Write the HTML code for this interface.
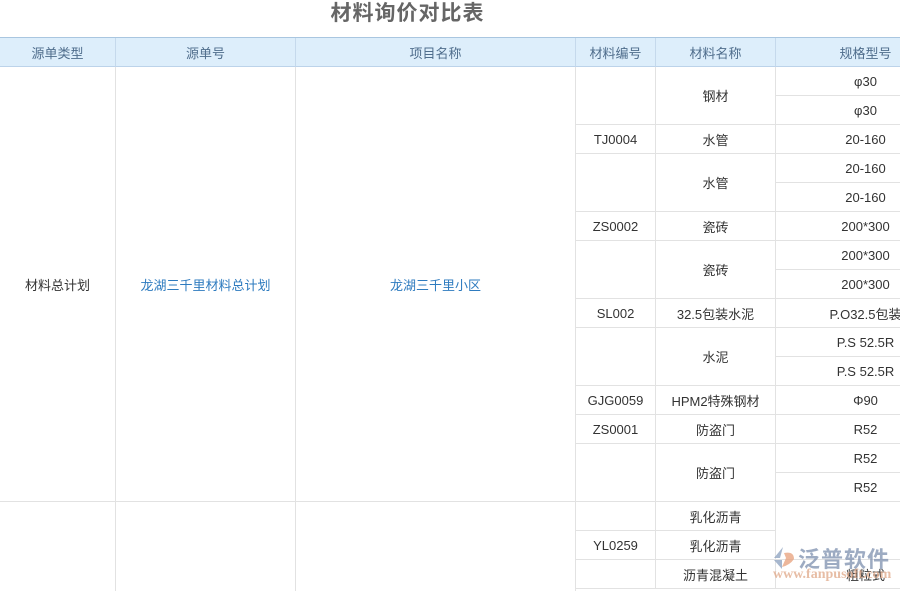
<!DOCTYPE html>
<html><head><meta charset="utf-8"><style>
html,body{margin:0;padding:0;width:900px;height:591px;overflow:hidden;background:#fff;}
body{position:relative;font-family:"Liberation Sans","Noto Sans CJK SC",sans-serif;font-size:13px;color:#333;}
.t{position:absolute;left:0;width:815px;top:0;height:30px;text-align:center;font-size:21px;font-weight:bold;color:#666;line-height:27px;letter-spacing:1px;}
.c{position:absolute;box-sizing:border-box;border-right:1px solid #e2e2e2;border-bottom:1px solid #e2e2e2;display:flex;align-items:center;justify-content:center;white-space:nowrap;}
.h{background:#ddeefb;color:#4f6d8c;border-right:1px solid #c5d9ec;border-bottom:1px solid #bcd3ea;}
.hb{position:absolute;left:0;top:37px;width:900px;height:1px;background:#a9c6e0;}
.b{color:#2e7bbf;}
.wm{position:absolute;left:770px;top:543px;opacity:.75;}
</style></head><body>
<div class="t">材料询价对比表</div>
<div class="hb"></div>
<div class="c h" style="left:0;top:38px;width:116px;height:29px">源单类型</div>
<div class="c h" style="left:116px;top:38px;width:180px;height:29px">源单号</div>
<div class="c h" style="left:296px;top:38px;width:280px;height:29px">项目名称</div>
<div class="c h" style="left:576px;top:38px;width:80px;height:29px">材料编号</div>
<div class="c h" style="left:656px;top:38px;width:120px;height:29px">材料名称</div>
<div class="c h" style="left:776px;top:38px;width:180px;height:29px">规格型号</div>

<div class="c" style="left:0;top:67px;width:116px;height:435px">材料总计划</div>
<div class="c b" style="left:116px;top:67px;width:180px;height:435px">龙湖三千里材料总计划</div>
<div class="c b" style="left:296px;top:67px;width:280px;height:435px">龙湖三千里小区</div>
<div class="c" style="left:0;top:502px;width:116px;height:100px"></div>
<div class="c" style="left:116px;top:502px;width:180px;height:100px"></div>
<div class="c" style="left:296px;top:502px;width:280px;height:100px"></div>

<div id="rows"></div>
<script>
var R=[["",2,"钢材",2],["TJ0004",1,"水管",1],["",2,"水管",2],["ZS0002",1,"瓷砖",1],["",2,"瓷砖",2],["SL002",1,"32.5包装水泥",1],["",2,"水泥",2],["GJG0059",1,"HPM2特殊钢材",1],["ZS0001",1,"防盗门",1],["",2,"防盗门",2],["",1,"乳化沥青",1],["YL0259",1,"乳化沥青",1],["",1,"沥青混凝土",1]];
var S=["φ30","φ30","20-160","20-160","20-160","200*300","200*300","200*300","P.O32.5包装","P.S 52.5R","P.S 52.5R","Φ90","R52","R52","R52",null,"","粗粒式"];
var h="",r=0;
for(var i=0;i<R.length;i++){var y=67+r*29,n=R[i][1];
h+='<div class="c" style="left:576px;top:'+y+'px;width:80px;height:'+(n*29)+'px">'+R[i][0]+'</div>';
h+='<div class="c" style="left:656px;top:'+y+'px;width:120px;height:'+(n*29)+'px">'+R[i][2]+'</div>';r+=n;}
for(var j=0;j<S.length;j++){if(S[j]===null)continue;var y=67+j*29,hh=29;if(j==16){y=67+15*29;hh=58;}
h+='<div class="c" style="left:776px;top:'+y+'px;width:180px;height:'+hh+'px">'+S[j]+'</div>';}
document.getElementById("rows").innerHTML=h;
</script>
<div class="wm">
<svg width="26" height="26" viewBox="0 0 26 26" style="position:absolute;left:0;top:2px"><path d="M13 2 L4 13 L10 13 Z" fill="#8aa0be"/><path d="M4 15 L12 24 L12 15 Z" fill="#8aa0be"/><path d="M14 8 Q24 6 24 14 Q20 20 12 22 L16 13 Z" fill="#e8a07a"/></svg>
<div style="position:absolute;left:28px;top:-1px;font-size:22px;font-weight:bold;color:#7d8fae;letter-spacing:1px;white-space:nowrap">泛普软件</div>
<div style="position:absolute;left:3px;top:24px;font-family:'Liberation Serif',serif;font-size:14px;font-weight:bold;color:#e0a888;white-space:nowrap">www.fanpusoft.com</div>
</div>
</body></html>
